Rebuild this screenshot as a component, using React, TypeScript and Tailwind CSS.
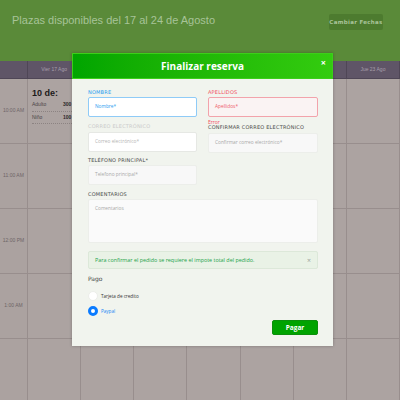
import React from 'react';

// only first and last day labels are visible, the modal covers the rest
const days = ['Vier 17 Ago', '', '', '', '', '', 'Jue 23 Ago'];
const hours = ['10:00 AM', '11:00 AM', '12:00 PM', '1:00 AM', ''];

const sans = { fontFamily: '"Liberation Sans", Arial, sans-serif' };
const wide = { fontFamily: '"DejaVu Sans", "Open Sans", sans-serif' };
const body = { fontFamily: '"Open Sans", "DejaVu Sans", sans-serif' };

function Field({
  label,
  placeholder,
  labelClass,
  inputClass,
  gap = 'mt-[2px]',
}: {
  label: string;
  placeholder: string;
  labelClass: string;
  inputClass: string;
  gap?: string;
}) {
  return (
    <div className="flex flex-col">
      <span className={`text-[5px] leading-[6px] tracking-[0.2px] uppercase ${labelClass}`} style={wide}>{label}</span>
      <div className={`${gap} h-[20px] rounded-[2px] flex items-center px-[6px] text-[4.8px] ${inputClass}`} style={body}>
        {placeholder}
      </div>
    </div>
  );
}

export default function App() {
  return (
    <div className="relative w-[400px] h-[400px] overflow-hidden bg-[#aba2a0]" style={sans}>
      {/* top banner */}
      <div className="h-[61px] bg-[#5a8a39] flex items-start justify-between pl-[12px] pr-[17px] pt-[13px]">
        <span className="text-[11px] text-[#a7c398] leading-[14px]">Plazas disponibles del 17 al 24 de Agosto</span>
        <div className="mt-[1px] h-[16px] w-[54px] rounded-[2px] bg-[#4d7b2f] flex items-center justify-center text-[5.5px] font-bold tracking-[0.3px] text-[#a9c49a]" style={wide}>
          Cambiar Fechas
        </div>
      </div>

      {/* day header */}
      <div className="grid grid-cols-[28px_repeat(7,1fr)] h-[18px] bg-[#5f5567] border-b border-[#4f4656]">
        <div className="border-r border-[#4f4656]" />
        {days.map((d, j) => (
          <div key={j} className="border-r border-[#4f4656] flex items-center justify-center text-[5px] text-[#a79fab]">{d}</div>
        ))}
      </div>

      {/* calendar grid */}
      {hours.map((h, i) => (
        <div key={i} className="grid grid-cols-[28px_repeat(7,1fr)] h-[65px] border-b border-[#988e8d]">
          <div className="border-r border-[#988e8d] flex items-center justify-center text-[5px] text-[#6e6567]">{h}</div>
          {days.map((_, j) => (
            <div key={j} className="border-r border-[#988e8d] bg-[#aca3a1]">
              {i === 0 && j === 0 && (
                <div className="pt-[8px] pl-[4px] pr-[2px]">
                  <div className="text-[9px] font-bold text-[#1c1a1a] leading-[12px]">10 de:</div>
                  <div className="flex text-[5px] text-[#4b4546] border-b border-dotted border-[#8c8382] py-[2px]">
                    <span className="w-[31px]">Adulto</span>
                    <span className="font-bold text-[#2d292a]">300</span>
                  </div>
                  <div className="flex text-[5px] text-[#4b4546] border-b border-dotted border-[#8c8382] py-[2px]">
                    <span className="w-[31px]">Niño</span>
                    <span className="font-bold text-[#2d292a]">100</span>
                  </div>
                </div>
              )}
            </div>
          ))}
        </div>
      ))}

      {/* modal */}
      <div className="absolute left-[72px] top-[53px] w-[261px] h-[293px] bg-[#f1f4ee] shadow-[0_0_3px_rgba(0,0,0,0.25)]" style={body}>
        <div className="relative h-[26px] bg-gradient-to-r from-[#00a500] to-[#33cc0f] flex items-center justify-center border border-[#3ccf1a]">
          <span className="text-[10px] font-bold text-white">Finalizar reserva</span>
          <span className="absolute right-[6px] top-[4px] text-[9px] font-bold text-white leading-none">×</span>
        </div>

        <div className="pl-[16px] pr-[15px] pt-[10px]">
          <div className="grid grid-cols-[109px_110px] gap-x-[11px]">
            <Field label="Nombre" placeholder="Nombre*" labelClass="text-[#1f9cf0]" gap="mt-[2px]" inputClass="bg-white border border-[#8fcbf7] text-[#2a9df0]" />
            <Field label="Apellidos" placeholder="Apellidos*" labelClass="text-[#f14f5f]" gap="mt-[2px]" inputClass="bg-[#faf3f3] border border-[#f2a3ab] text-[#ef5b6a]" />
          </div>

          <div className="grid grid-cols-[109px_110px] gap-x-[11px] mt-[3px]">
            <div className="pt-[3px]">
              <Field label="Correo electrónico" placeholder="Correo electrónico*" labelClass="text-[#cbcbcb]" gap="mt-[3px]" inputClass="bg-white border border-[#e6e8e4] text-[#b5b5b5]" />
            </div>
            <div className="flex flex-col">
              <span className="text-[5px] leading-[4px] text-[#f14f5f]">Error</span>
              <Field label="Confirmar correo electrónico" placeholder="Confirmar correo electrónico*" labelClass="text-[#4a4a4a]" gap="mt-[3px]" inputClass="bg-[#f8f8f8] border border-[#eceeea] text-[#a8a8a8]" />
            </div>
          </div>

          <div className="grid grid-cols-[109px_110px] gap-x-[11px] mt-[4px]">
            <Field label="Teléfono principal*" placeholder="Telefono principal*" labelClass="text-[#4a4a4a]" gap="mt-[2px]" inputClass="bg-[#f8f8f8] border border-[#eceeea] text-[#a8a8a8]" />
          </div>

          <div className="mt-[6px] flex flex-col">
            <span className="text-[5px] leading-[6px] tracking-[0.2px] text-[#4a4a4a]" style={wide}>COMENTARIOS</span>
            <div className="mt-[2px] h-[44px] w-[230px] rounded-[2px] bg-[#fafafa] border border-[#eceeea] px-[6px] pt-[5px] text-[4.8px] text-[#a8a8a8]">Comentarios</div>
          </div>

          <div className="mt-[8px] w-[230px] h-[18px] rounded-[2px] bg-[#e9f2e6] border border-[#dce8d9] flex items-center justify-between px-[6px]">
            <span className="text-[5.4px] text-[#1ea34a]">Para confirmar el pedido se requiere el impote total del pedido.</span>
            <span className="text-[7px] text-[#9aa39a] leading-none">×</span>
          </div>

          <div className="mt-[6px] text-[6px] text-[#4a4a4a] leading-[8px]" style={wide}>Pago</div>

          <div className="mt-[8px] flex items-center gap-[3px]">
            <div className="w-[10px] h-[10px] rounded-full bg-white border border-[#eceeea]" />
            <span className="text-[4.6px] text-[#333]">Tarjeta de credito</span>
          </div>

          <div className="mt-[5px] flex items-center gap-[3px]">
            <div className="w-[10px] h-[10px] rounded-full bg-white border-[3px] border-[#0a7bff]" />
            <span className="text-[4.6px] text-[#1a86f5]">Paypal</span>
          </div>

          <div className="flex justify-end w-[230px] mt-[4px]">
            <div className="w-[46px] h-[15px] rounded-[2px] bg-[#00a300] border border-[#0c8f0c] flex items-center justify-center text-[6.5px] font-bold text-white">
              Pagar
            </div>
          </div>
        </div>
      </div>
    </div>
  );
}
